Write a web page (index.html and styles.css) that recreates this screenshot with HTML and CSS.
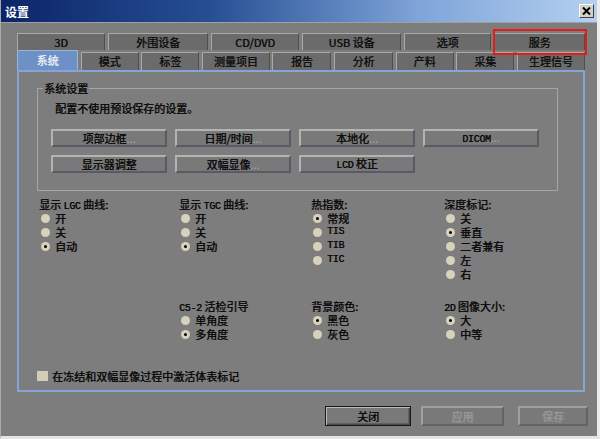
FILE: index.html
```html
<!DOCTYPE html>
<html lang="zh">
<head>
<meta charset="utf-8">
<title>设置</title>
<link rel="stylesheet" href="styles.css">
</head>
<body>
<div class="window">
  <div class="titlebar">
    <span class="title">设置</span>
    <span class="close">
      <svg width="9" height="8" viewBox="0 0 9 8"><path d="M1 0.5 L8 7.5 M8 0.5 L1 7.5" stroke="#000" stroke-width="2"/></svg>
    </span>
  </div>
  <div class="content">
    <div class="tabrow row1">
      <div class="tab">3D</div>
      <div class="tab">外围设备</div>
      <div class="tab">CD/DVD</div>
      <div class="tab">USB 设备</div>
      <div class="tab">选项</div>
      <div class="tab">服务</div>
    </div>
    <div class="tabrow row2">
      <div class="tab selected">系统</div>
      <div class="tab">模式</div>
      <div class="tab">标签</div>
      <div class="tab">测量项目</div>
      <div class="tab">报告</div>
      <div class="tab">分析</div>
      <div class="tab">产料</div>
      <div class="tab">采集</div>
      <div class="tab">生理信号</div>
    </div>
    <div class="panel">
      <div class="group">
        <span class="legend">系统设置</span>
        <p class="note">配置不使用预设保存的设置。</p>
        <div class="btngrid">
          <button class="btn">项部边框<span class="dots">...</span></button>
          <button class="btn">日期/时间<span class="dots">...</span></button>
          <button class="btn">本地化<span class="dots">...</span></button>
          <button class="btn"><span class="mono">DICOM</span><span class="dots">...</span></button>
          <button class="btn">显示器调整</button>
          <button class="btn">双幅显像<span class="dots">...</span></button>
          <button class="btn"><span class="mono">LCD</span> 校正</button>
        </div>
      </div>
      <div class="options">
        <div class="opt">
          <div class="olabel">显示 <span class="mono">LGC</span> 曲线:</div>
          <div class="radio"><i class="dot"></i>开</div>
          <div class="radio"><i class="dot"></i>关</div>
          <div class="radio on"><i class="dot"></i>自动</div>
        </div>
        <div class="opt">
          <div class="olabel">显示 <span class="mono">TGC</span> 曲线:</div>
          <div class="radio"><i class="dot"></i>开</div>
          <div class="radio"><i class="dot"></i>关</div>
          <div class="radio on"><i class="dot"></i>自动</div>
        </div>
        <div class="opt">
          <div class="olabel">热指数:</div>
          <div class="radio on"><i class="dot"></i>常规</div>
          <div class="radio"><i class="dot"></i><span class="mono">TIS</span></div>
          <div class="radio"><i class="dot"></i><span class="mono">TIB</span></div>
          <div class="radio"><i class="dot"></i><span class="mono">TIC</span></div>
        </div>
        <div class="opt">
          <div class="olabel">深度标记:</div>
          <div class="radio"><i class="dot"></i>关</div>
          <div class="radio on"><i class="dot"></i>垂直</div>
          <div class="radio"><i class="dot"></i>二者兼有</div>
          <div class="radio"><i class="dot"></i>左</div>
          <div class="radio"><i class="dot"></i>右</div>
        </div>
        <div class="opt"></div>
        <div class="opt">
          <div class="olabel"><span class="mono">C5-2</span> 活检引导</div>
          <div class="radio"><i class="dot"></i>单角度</div>
          <div class="radio on"><i class="dot"></i>多角度</div>
        </div>
        <div class="opt">
          <div class="olabel">背景颜色:</div>
          <div class="radio on"><i class="dot"></i>黑色</div>
          <div class="radio"><i class="dot"></i>灰色</div>
        </div>
        <div class="opt">
          <div class="olabel"><span class="mono">2D</span> 图像大小:</div>
          <div class="radio on"><i class="dot"></i>大</div>
          <div class="radio"><i class="dot"></i>中等</div>
        </div>
      </div>
      <div class="check"><i class="box"></i>在冻结和双幅显像过程中激活体表标记</div>
    </div>
    <div class="footer">
      <button class="btn fbtn default">关闭</button>
      <button class="btn fbtn disabled apply">应用</button>
      <button class="btn fbtn disabled save">保存</button>
    </div>
  </div>
  <div class="highlight"></div>
</div>
</body>
</html>
```
FILE: styles.css
```css
html, body {
  margin: 0;
  padding: 0;
}
body {
  width: 600px;
  height: 439px;
  overflow: hidden;
  background: #7d7d7d;
  font-family: "Noto Sans CJK SC", "DejaVu Sans", sans-serif;
  font-size: 11px;
  color: #0c0c0c;
  text-shadow: 0.4px 0 0 #0c0c0c;
}
.mono {
  font-family: "Liberation Mono", "DejaVu Sans Mono", monospace;
  font-size: 10px;
  letter-spacing: -0.3px;
}
.window {
  position: relative;
  width: 600px;
  height: 439px;
  box-sizing: border-box;
  background: #7d7d7d;
  border-left: 1px solid #a8a8a8;
  border-right: 3px solid #ececec;
  border-bottom: 3px solid #e4e4e4;
}
.titlebar {
  height: 22px;
  display: flex;
  align-items: center;
  justify-content: space-between;
  padding: 0 3px 0 4px;
  background: linear-gradient(90deg, #0c2468 0%, #264f93 35%, #7ea4d8 70%, #b4d0f0 100%);
  border-bottom: 1px solid #a0a0a0;
}
.title {
  color: #ffffff;
  font-weight: bold;
  font-size: 12px;
  text-shadow: none;
}
.close {
  width: 13px;
  height: 12px;
  display: flex;
  align-items: center;
  justify-content: center;
  background: #d4d0c8;
  border: 1px solid;
  border-color: #ffffff #404040 #404040 #ffffff;
}
.content {
  padding: 0 12px 0 16px;
}
.tabrow {
  display: grid;
  align-items: end;
}
.row1 {
  margin-top: 10px;
  height: 17px;
  grid-template-columns: 88px 100px 88px 99px 87px 91px;
  column-gap: 3px;
}
.row2 {
  margin-top: 2px;
  height: 18px;
  grid-template-columns: 61px 58px 58px 68px 59px 59px 58px 58px 68px;
  column-gap: 2.6px;
}
.tab {
  box-sizing: border-box;
  height: 100%;
  display: flex;
  align-items: center;
  justify-content: center;
  background: #6b6b6b;
  border-top: 1px solid #a9a9a9;
  border-left: 1px solid #a9a9a9;
  border-right: 1px solid #4e4e4e;
  color: #121212;
  line-height: 1;
}
.tab.selected {
  height: 20px;
  margin-top: -2px;
  background: #6d90c6;
  border-color: #9ab4dc;
  color: #e8ecf4;
  text-shadow: 0.4px 0 0 #e8ecf4;
}
.panel {
  box-sizing: border-box;
  height: 322px;
  border: 2px solid #86a5d6;
  padding: 16px 25px 0 18px;
  display: flex;
  flex-direction: column;
}
.group {
  position: relative;
  box-sizing: border-box;
  width: 521px;
  height: 103px;
  border: 1px solid #a6a6a6;
  padding: 12px 0 0 13px;
}
.legend {
  position: absolute;
  top: -8px;
  left: 5px;
  padding: 0 1px;
  background: #7d7d7d;
  line-height: 14px;
}
.note {
  margin: 0 0 14px 4px;
  line-height: 14px;
}
.btngrid {
  display: grid;
  grid-template-columns: repeat(4, 116px);
  column-gap: 8px;
  row-gap: 8px;
}
.btn {
  box-sizing: border-box;
  height: 18px;
  padding: 0;
  font-family: inherit;
  font-size: 11px;
  color: #0c0c0c;
  text-shadow: 0.4px 0 0 #0c0c0c;
  background: #797979;
  border: 2px solid;
  border-color: #b3b3b3 #5a5a66 #5a5a66 #b3b3b3;
  line-height: 1;
}
.dots {
  color: #a8a8a8;
  text-shadow: none;
}
.options {
  display: grid;
  grid-template-columns: 140px 132px 133px 1fr;
  grid-template-rows: 102px auto;
  margin-top: 6px;
  padding-left: 2px;
}
.olabel {
  line-height: 14px;
  height: 14px;
}
.radio {
  display: flex;
  align-items: center;
  height: 14px;
  line-height: 14px;
  padding-left: 2px;
}
.dot {
  width: 9px;
  height: 9px;
  border-radius: 50%;
  background: #d7d2bc;
  margin-right: 5px;
  display: flex;
  align-items: center;
  justify-content: center;
  flex: none;
}
.radio.on .dot::after {
  content: "";
  width: 3px;
  height: 3px;
  border-radius: 50%;
  background: #000;
}
.check {
  margin-top: 28px;
  display: flex;
  align-items: center;
  height: 14px;
  line-height: 14px;
}
.box {
  width: 11px;
  height: 10px;
  background: #d1cdb6;
  margin-right: 4px;
  flex: none;
}
.footer {
  display: flex;
  justify-content: flex-end;
  margin-top: 14px;
  margin-right: -3px;
}
.fbtn {
  height: 20px;
}
.default {
  width: 86px;
  border: 1px solid #161616;
  box-shadow: inset 1px 1px #bcbcbc, inset -1px -1px #4a4a52, inset -2px -2px #5e5e66;
}
.disabled {
  color: #9c9c9c;
  text-shadow: 1px 1px #8a8a8a;
  border-color: #a0a0a0 #626268 #626268 #a0a0a0;
}
.apply {
  width: 83px;
  margin-left: 10px;
}
.save {
  width: 70px;
  margin-left: 14px;
}
.highlight {
  position: absolute;
  left: 492px;
  top: 29px;
  width: 94px;
  height: 26px;
  box-sizing: border-box;
  border: 2px solid #e41b1b;
}
```
